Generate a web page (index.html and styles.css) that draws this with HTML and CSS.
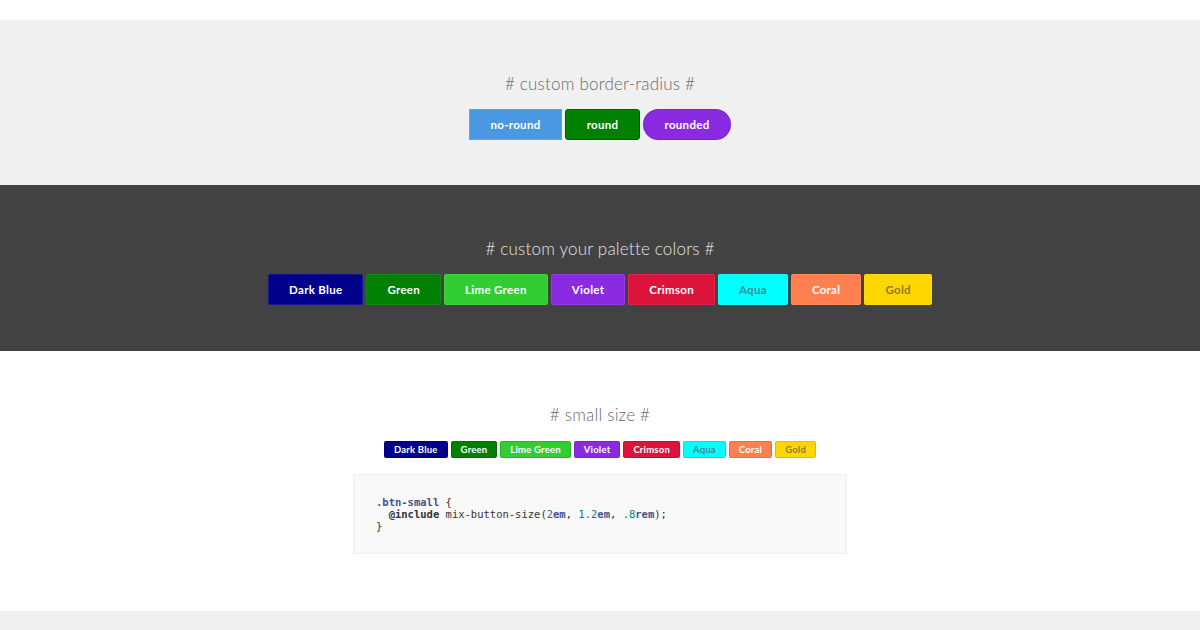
FILE: index.html
```html
<!DOCTYPE html>
<html>
<head>
<meta charset="utf-8">
<link rel="stylesheet" href="styles.css">
</head>
<body>
<div class="top-space"></div>
<section class="sec sec-light">
  <h2 class="title"># custom border-radius #</h2>
  <div class="btns">
    <span class="btn btn-blue r-none">no-round</span>
    <span class="btn c-green r-round">round</span>
    <span class="btn c-violet r-pill">rounded</span>
  </div>
</section>
<section class="sec sec-dark">
  <h2 class="title title-dark"># custom your palette colors #</h2>
  <div class="btns">
    <span class="btn c-darkblue">Dark Blue</span>
    <span class="btn c-green">Green</span>
    <span class="btn c-lime">Lime Green</span>
    <span class="btn c-violet">Violet</span>
    <span class="btn c-crimson">Crimson</span>
    <span class="btn c-aqua">Aqua</span>
    <span class="btn c-coral">Coral</span>
    <span class="btn c-gold">Gold</span>
  </div>
</section>
<section class="sec sec-white">
  <h2 class="title"># small size #</h2>
  <div class="btns btns-small">
    <span class="btn btn-small c-darkblue">Dark Blue</span>
    <span class="btn btn-small c-green">Green</span>
    <span class="btn btn-small c-lime">Lime Green</span>
    <span class="btn btn-small c-violet">Violet</span>
    <span class="btn btn-small c-crimson">Crimson</span>
    <span class="btn btn-small c-aqua">Aqua</span>
    <span class="btn btn-small c-coral">Coral</span>
    <span class="btn btn-small c-gold">Gold</span>
  </div>
  <pre class="code"><code><span class="line"><span class="k-class">.btn-small</span> {</span>
<span class="line">  <span class="k-kw">@include</span> mix-button-size(<span class="k-num">2</span><span class="k-unit">em</span>, <span class="k-num">1.2</span><span class="k-unit">em</span>, <span class="k-num">.8</span><span class="k-unit">rem</span>);</span>
<span class="line">}</span></code></pre>
</section>
<div class="bottom-band"></div>
</body>
</html>
```

FILE: styles.css
```css
html, body {
  margin: 0;
  padding: 0;
  background: #ffffff;
  font-family: "Lato", "Open Sans", sans-serif;
  overflow: hidden;
}
.top-space {
  height: 20px;
  background: #ffffff;
}
.sec {
  display: flex;
  flex-direction: column;
  align-items: center;
  padding-top: 50px;
  box-sizing: border-box;
}
.sec-light {
  background: #f0f0f0;
  height: 165px;
}
.sec-dark {
  background: #424242;
  height: 166px;
}
.sec-white {
  background: #ffffff;
  height: 260px;
}
.bottom-band {
  height: 19px;
  background: #f0f0f0;
}
.title {
  margin: 0;
  font-weight: 300;
  font-size: 17px;
  line-height: 27px;
  color: #6a6a6a;
  letter-spacing: 0.2px;
}
.title-dark {
  color: #e2e2e2;
}
.btns {
  display: flex;
  gap: 3px;
  margin-top: 12px;
}
.btn {
  display: flex;
  align-items: center;
  justify-content: center;
  box-sizing: border-box;
  height: 31px;
  padding: 0 20px;
  font-size: 11.5px;
  font-weight: 700;
  color: #ffffff;
  white-space: nowrap;
  border: 1px solid rgba(0, 0, 0, 0.12);
  border-radius: 2px;
  letter-spacing: 0.3px;
}
.btn-blue { background: #4a97e2; border-color: #5ea4e6; }
.r-none { border-radius: 0; width: 93px; padding: 0; }
.r-round { border-radius: 3px; width: 75px; padding: 0; border-color: #0a5a0a; }
.r-pill { border-radius: 16px; width: 88px; padding: 0; }
.c-darkblue { background: #00008b; }
.c-green { background: #008000; }
.c-lime { background: #32cd32; }
.c-violet { background: #8a2be2; }
.c-crimson { background: #dc143c; }
.c-aqua { background: #00ffff; color: #3b8f8f; }
.c-coral { background: #ff7f50; }
.c-gold { background: #ffd700; color: #8e7a32; }
.sec-dark .btn { border-color: rgba(255, 255, 255, 0.08); }
.btns-small {
  gap: 3px;
  margin-top: 13px;
}
.btn-small {
  height: 17px;
  padding: 0 9px;
  font-size: 9.5px;
  border-radius: 2px;
  letter-spacing: 0.2px;
}
.code {
  box-sizing: border-box;
  width: 494px;
  height: 80px;
  margin: 16px 0 0;
  padding: 21px 22px;
  background: #f8f8f8;
  border: 1px solid #eeeeee;
  font-family: "DejaVu Sans Mono", monospace;
  font-size: 10.5px;
  line-height: 12px;
  color: #333333;
}
.code code { font-family: inherit; }
.k-class { color: #445588; font-weight: 700; }
.k-kw { color: #333333; font-weight: 700; }
.k-num { color: #008080; }
.k-unit { color: #445588; font-weight: 700; }
```
